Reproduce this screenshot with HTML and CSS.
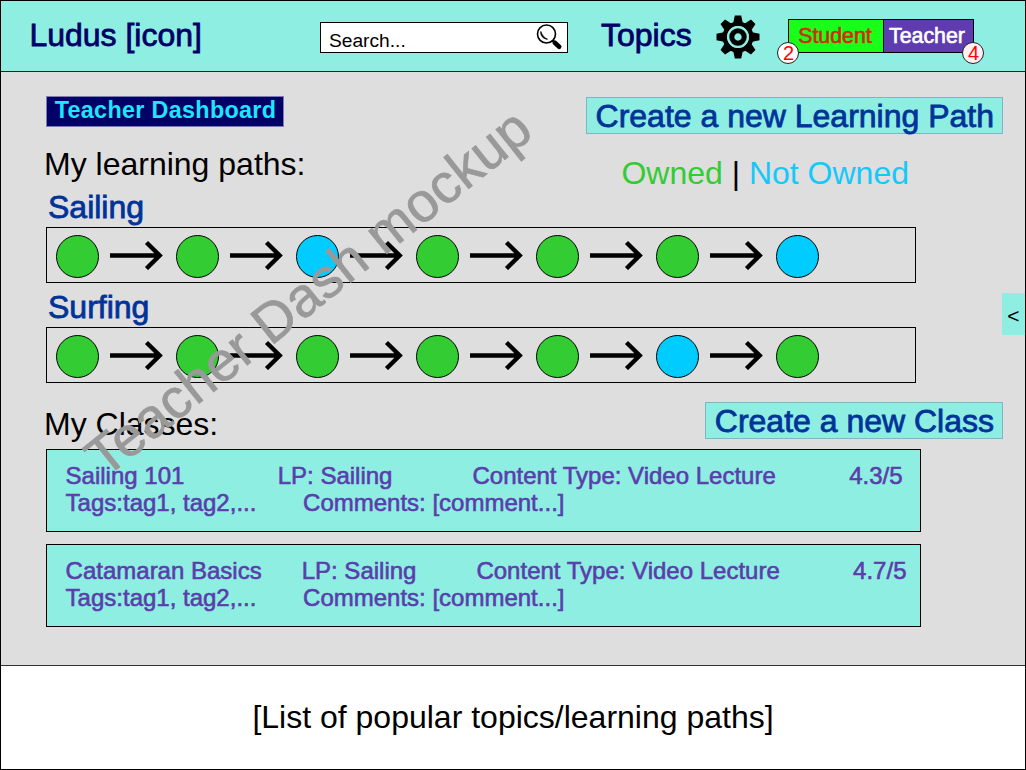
FILE: index.html
```html
<!DOCTYPE html>
<html lang="en">
<head>
<meta charset="utf-8">
<title>Ludus – Teacher Dashboard</title>
<link rel="stylesheet" href="styles.css">
</head>
<body>
<svg class="defs" aria-hidden="true">
  <symbol id="arrow" viewBox="0 0 56 30">
    <path d="M0 15.5H50M36.5 2.5L49.7 15.5L36.5 28.5" fill="none" stroke="#000" stroke-width="4.4"/>
  </symbol>
</svg>
<div class="page">
  <header class="header">
    <div class="brand">Ludus [icon]</div>
    <div class="search">
      <span>Search...</span>
      <svg class="search-icon" viewBox="0 0 28 28">
        <circle cx="11.5" cy="11" r="9" fill="none" stroke="#000" stroke-width="1.6"/>
        <path d="M5.8 8.5C5.3 12.5 8 16 12.5 16.2C9.3 14.8 6.9 12.2 5.8 8.5Z" fill="#000" stroke="#000" stroke-width=".8"/>
        <path d="M17.5 17.5L20 20" stroke="#000" stroke-width="2"/>
        <path d="M19.8 19.8L24.2 23.7" stroke="#000" stroke-width="4.6" stroke-linecap="round"/>
      </svg>
    </div>
    <div class="topics">Topics</div>
    <svg class="gear" viewBox="-22 -22 44 44">
      <path id="tooth" d="M-5 -13L-3.2 -21.5H3.2L5 -13Z"/>
      <use href="#tooth" transform="rotate(45)"/>
      <use href="#tooth" transform="rotate(90)"/>
      <use href="#tooth" transform="rotate(135)"/>
      <use href="#tooth" transform="rotate(180)"/>
      <use href="#tooth" transform="rotate(225)"/>
      <use href="#tooth" transform="rotate(270)"/>
      <use href="#tooth" transform="rotate(315)"/>
      <circle r="13.2" fill="none" stroke="#000" stroke-width="4.6"/>
      <circle r="10.9" fill="#8feee2"/>
      <circle r="6.2" fill="none" stroke="#000" stroke-width="5"/>
    </svg>
    <div class="roles">
      <div class="role student">Student<span class="badge badge-left">2</span></div>
      <div class="role teacher">Teacher<span class="badge badge-right">4</span></div>
    </div>
  </header>

  <main class="main">
    <div class="content">
      <div class="title">Teacher Dashboard</div>
      <h2 class="heading">My learning paths:</h2>
      <h3 class="path-name">Sailing</h3>
      <div class="path">
        <i class="node"></i><svg class="arrow"><use href="#arrow"/></svg>
        <i class="node"></i><svg class="arrow"><use href="#arrow"/></svg>
        <i class="node other"></i><svg class="arrow"><use href="#arrow"/></svg>
        <i class="node"></i><svg class="arrow"><use href="#arrow"/></svg>
        <i class="node"></i><svg class="arrow"><use href="#arrow"/></svg>
        <i class="node"></i><svg class="arrow"><use href="#arrow"/></svg>
        <i class="node other"></i>
      </div>
      <h3 class="path-name">Surfing</h3>
      <div class="path">
        <i class="node"></i><svg class="arrow"><use href="#arrow"/></svg>
        <i class="node"></i><svg class="arrow"><use href="#arrow"/></svg>
        <i class="node"></i><svg class="arrow"><use href="#arrow"/></svg>
        <i class="node"></i><svg class="arrow"><use href="#arrow"/></svg>
        <i class="node"></i><svg class="arrow"><use href="#arrow"/></svg>
        <i class="node other"></i><svg class="arrow"><use href="#arrow"/></svg>
        <i class="node"></i>
      </div>
      <h2 class="heading classes-heading">My Classes:</h2>
      <div class="card">
        <div class="line">Sailing 101              LP: Sailing            Content Type: Video Lecture           4.3/5</div>
        <div class="line">Tags:tag1, tag2,...       Comments: [comment...]</div>
      </div>
      <div class="card">
        <div class="line">Catamaran Basics      LP: Sailing         Content Type: Video Lecture           4.7/5</div>
        <div class="line">Tags:tag1, tag2,...       Comments: [comment...]</div>
      </div>
    </div>
    <div class="side">
      <div class="button">Create a new Learning Path</div>
      <div class="legend"><span class="owned">Owned</span> | <span class="not-owned">Not Owned</span></div>
      <div class="drawer">&lt;</div>
      <div class="button class-button">Create a new Class</div>
    </div>
    <div class="watermark">Teacher Dash mockup</div>
  </main>

  <footer class="footer">[List of popular topics/learning paths]</footer>
</div>
</body>
</html>
```

FILE: styles.css
```css
* { box-sizing: border-box; }
body { margin: 0; }
.defs { position: absolute; width: 0; height: 0; }

.page {
  position: relative;
  width: 1026px;
  height: 770px;
  border: 1px solid #000;
  display: flex;
  flex-direction: column;
  overflow: hidden;
  background: #dedede;
  font: 32px/36px "Liberation Sans", Arial, sans-serif;
  color: #000;
  white-space: nowrap;
}

/* Header */
.header {
  height: 71px;
  flex: none;
  display: flex;
  align-items: flex-start;
  background: #8feee2;
  border-bottom: 1px solid #222;
}
.brand, .topics {
  color: #006;
  -webkit-text-stroke: .8px #006;
}
.brand { width: 290.6px; margin: 16px 0 0 28.4px; }
.search {
  width: 248px;
  height: 31px;
  margin-top: 21px;
  padding-left: 8px;
  border: 1px solid #000;
  background: #fff;
  display: flex;
  justify-content: space-between;
  font-size: 19.2px;
  line-height: 35px;
}
.search-icon { width: 28px; height: 28px; margin-right: 4px; }
.topics { width: 115px; margin: 16px 0 0 33px; }
.gear { width: 44px; height: 44px; margin: 14px 0 0; }
.roles {
  display: flex;
  margin: 18px 0 0 28px;
  border: 1px solid #000;
  font-size: 21.33px;
  line-height: 32px;
}
.role { position: relative; height: 32px; text-align: center; }
.student {
  width: 95px;
  padding-right: 2px;
  border-right: 1px solid #000;
  background: #1aff1a;
  color: #d42a0c;
  -webkit-text-stroke: .6px #d42a0c;
}
.teacher {
  width: 89px;
  padding-right: 3px;
  background: #5e3cb0;
  color: #fff;
  -webkit-text-stroke: .6px #fff;
}
.badge {
  position: absolute;
  top: 22px;
  width: 22px;
  height: 22px;
  border: 1px solid #222;
  border-radius: 50%;
  background: #fff;
  color: #f00;
  font-size: 20px;
  line-height: 21px;
  -webkit-text-stroke: 0;
}
.badge-left { left: -11.5px; }
.badge-right { right: -11.5px; background: #fff0f3; }

/* Dashboard */
.main {
  height: 594px;
  flex: none;
  display: flex;
  border-bottom: 1px solid #333;
}
.content { width: 875px; margin-left: 45px; flex: none; }
.title {
  width: 238px;
  height: 31px;
  margin-top: 24px;
  padding-left: 1px;
  border: 1px solid #7d7db4;
  background: #006;
  color: #1ee6ff;
  text-align: center;
  font-size: 23.3px;
  font-weight: bold;
  letter-spacing: .35px;
  line-height: 26px;
}
.heading, .path-name { margin: 0; font-size: 32px; font-weight: normal; }
.heading { margin: 19px 0 0 -2px; }
.path-name {
  height: 36px;
  margin: 7px 0 0 2px;
  color: #039;
  -webkit-text-stroke: .8px #039;
}
.path {
  width: 870px;
  height: 56px;
  margin-top: 2px;
  padding-left: 9px;
  border: 1px solid #000;
  display: flex;
  align-items: center;
}
.path + .path-name { margin-top: 6px; }
.node {
  width: 43px;
  height: 43px;
  border: 1px solid #000;
  border-radius: 50%;
  background: #3c3;
  margin-top: 3px;
}
.node.other { background: #0cf; }
.arrow { width: 56px; height: 30px; margin: 0 10px 0 11px; }
.classes-heading { margin-top: 23px; }
.card {
  width: 875px;
  height: 83px;
  margin-top: 12px;
  padding: 12px 0 0 18.6px;
  border: 1px solid #000;
  background: #8feee2;
  color: #5a3eac;
  font-size: 24px;
  line-height: 27px;
  -webkit-text-stroke: .6px #5a3eac;
}
.line { white-space: pre; }
.classes-heading + .card { margin-top: 7px; }

/* Right column, overlapping the free end of the left one */
.side {
  width: 439px;
  flex: none;
  margin-left: -335px;
  display: flex;
  flex-direction: column;
  align-items: flex-end;
}
.button {
  height: 37px;
  margin: 25px 22px 0 0;
  padding: 0 8px 0 9px;
  border: 1px solid #7fb5c4;
  background: #8feee2;
  color: #039;
  -webkit-text-stroke: .8px #039;
}
.legend { margin: 21px 116px 0 0; }
.owned { color: #3c3; }
.not-owned { color: #15c8fb; }
.drawer {
  width: 23px;
  height: 42px;
  margin-top: 102px;
  background: #8feee2;
  text-align: center;
  font-size: 21px;
  line-height: 45px;
}
.class-button { margin-top: 67px; }

.watermark {
  position: absolute;
  left: 104px;
  top: 431px;
  font-size: 55.4px;
  line-height: 56px;
  color: #999;
  -webkit-text-stroke: .7px #999;
  transform: rotate(-38.6deg);
  transform-origin: 0 47.4px;
}

/* Footer */
.footer {
  flex: 1;
  background: #fff;
  padding-top: 33px;
  text-align: center;
}
```
